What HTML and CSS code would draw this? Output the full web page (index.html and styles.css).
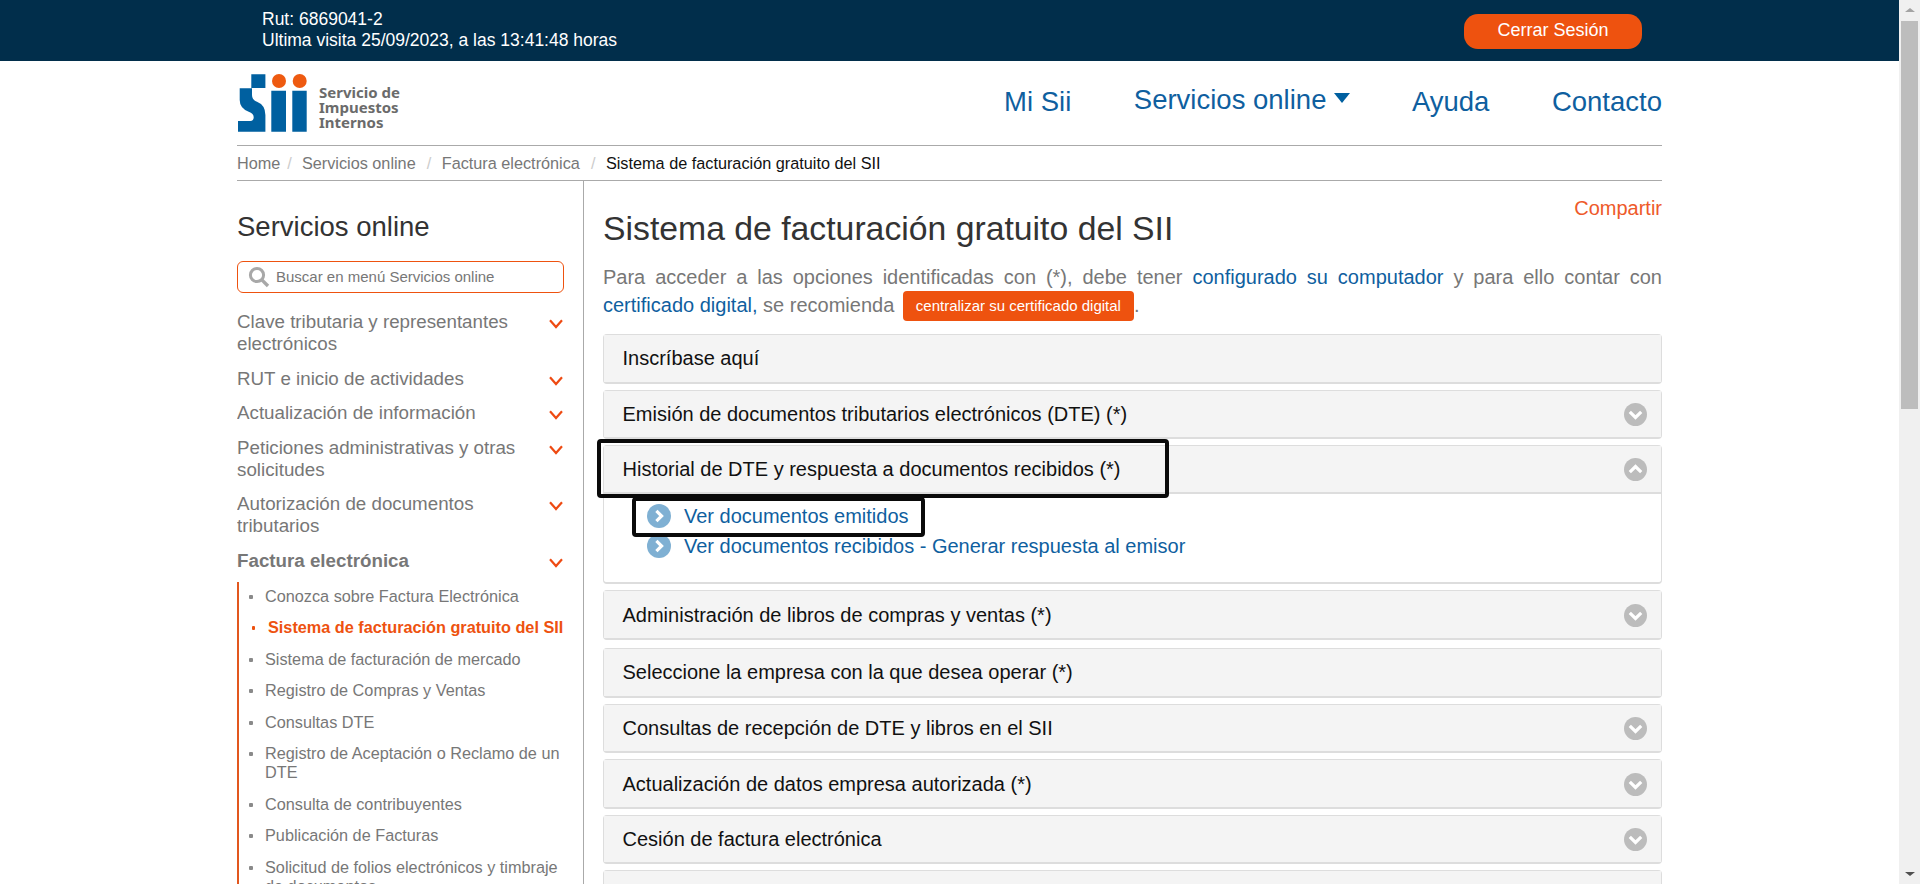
FILE: index.html
```html
<!DOCTYPE html>
<html lang="es">
<head>
<meta charset="utf-8">
<title>Sistema de facturación gratuito del SII</title>
<link rel="stylesheet" href="styles.css">
</head>
<body>
<svg class="sprite" width="0" height="0" aria-hidden="true">
  <symbol id="chev" viewBox="0 0 14 10"><path d="M1 1.2 7 8 13 1.2" fill="none" stroke="#ee4a12" stroke-width="2.2"/></symbol>
  <symbol id="circle-down" viewBox="0 0 23 23"><circle cx="11.5" cy="11.5" r="11.5" fill="#bcbcbc"/><path d="M5.8 8.8 11.5 14.4 17.2 8.8" fill="none" stroke="#fff" stroke-width="3.2"/></symbol>
  <symbol id="circle-up" viewBox="0 0 23 23"><circle cx="11.5" cy="11.5" r="11.5" fill="#bcbcbc"/><path d="M5.8 14.2 11.5 8.6 17.2 14.2" fill="none" stroke="#fff" stroke-width="3.2"/></symbol>
  <symbol id="circle-right" viewBox="0 0 24 24"><circle cx="12" cy="12" r="12" fill="#7fb0d3"/><path d="M9.4 6.8 14.6 12 9.4 17.2" fill="none" stroke="#fff" stroke-width="3.2"/></symbol>
</svg>
<div class="page">
  <header class="topbar">
    <div class="container topbar-inner">
      <div class="user">Rut: 6869041-2<br>Ultima visita 25/09/2023, a las 13:41:48 horas</div>
      <a class="logout">Cerrar Sesión</a>
    </div>
  </header>
  <div class="container">
    <div class="head">
      <a class="logo">
        <svg class="logo-mark" width="70" height="60" viewBox="5 4 70 60" aria-hidden="true">
          <path fill="#0060a0" d="M19.3 4.3H33.4V18H19.3ZM7.7 18.3H20V25Q20 30 25 31.7 33.4 35 33.4 45V61.7H6V51H18.3Q21.7 51 21.7 47.3 21.7 43.3 16.7 41.7 7.7 38.3 7.7 30Z"/>
          <path fill="#0060a0" d="M39.3 20.7H54V61.7H39.3ZM60.3 20.7H74.7V61.7H60.3Z"/>
          <circle cx="47" cy="11" r="7" fill="#ee5a10"/><circle cx="67.7" cy="11" r="7" fill="#ee5a10"/>
        </svg>
        <span class="logo-text">Servicio de<br>Impuestos<br>Internos</span>
      </a>
      <nav class="mainnav">
        <a>Mi Sii</a>
        <a class="nav-drop">Servicios online<i class="caret"></i></a>
        <a>Ayuda</a>
        <a>Contacto</a>
      </nav>
    </div>
    <div class="crumbs">
      <a>Home</a><span class="sep sep-first">/</span><a>Servicios online</a><span class="sep">/</span><a>Factura electrónica</a><span class="sep">/</span><span class="crumb-current">Sistema de facturación gratuito del SII</span>
    </div>
    <div class="columns">
      <aside class="sidebar">
        <h2>Servicios online</h2>
        <div class="search">
          <svg width="22" height="22" viewBox="0 0 22 22" aria-hidden="true"><circle cx="9" cy="9" r="6.6" fill="none" stroke="#a8a8a8" stroke-width="3"/><path d="M13.6 13.6 20 20" stroke="#a8a8a8" stroke-width="3.4"/></svg>
          <span class="search-text">Buscar en menú Servicios online</span>
        </div>
        <ul class="menu">
          <li><a>Clave tributaria y representantes electrónicos</a><svg><use href="#chev"/></svg></li>
          <li><a>RUT e inicio de actividades</a><svg><use href="#chev"/></svg></li>
          <li><a>Actualización de información</a><svg><use href="#chev"/></svg></li>
          <li><a>Peticiones administrativas y otras solicitudes</a><svg><use href="#chev"/></svg></li>
          <li><a>Autorización de documentos tributarios</a><svg><use href="#chev"/></svg></li>
          <li class="open"><a>Factura electrónica</a><svg><use href="#chev"/></svg></li>
        </ul>
        <ul class="submenu">
          <li>Conozca sobre Factura Electrónica</li>
          <li class="active">Sistema de facturación gratuito del SII</li>
          <li>Sistema de facturación de mercado</li>
          <li>Registro de Compras y Ventas</li>
          <li>Consultas DTE</li>
          <li>Registro de Aceptación o Reclamo de un DTE</li>
          <li>Consulta de contribuyentes</li>
          <li>Publicación de Facturas</li>
          <li>Solicitud de folios electrónicos y timbraje de documentos</li>
        </ul>
      </aside>
      <main class="content">
        <a class="share">Compartir</a>
        <h1>Sistema de facturación gratuito del SII</h1>
        <p class="intro">Para acceder a las opciones identificadas con (*), debe tener <a>configurado su computador</a> y para ello contar con <a>certificado digital,</a> se recomienda <a class="cert-btn">centralizar su certificado digital</a>.</p>
        <div class="panel"><div class="panel-head">Inscríbase aquí</div></div>
        <div class="panel"><div class="panel-head">Emisión de documentos tributarios electrónicos (DTE) (*)<svg><use href="#circle-down"/></svg></div></div>
        <div class="panel panel-open">
          <div class="panel-head">Historial de DTE y respuesta a documentos recibidos (*)<svg><use href="#circle-up"/></svg></div>
          <ul class="panel-list">
            <li><svg><use href="#circle-right"/></svg><a>Ver documentos emitidos</a></li>
            <li><svg><use href="#circle-right"/></svg><a>Ver documentos recibidos - Generar respuesta al emisor</a></li>
          </ul>
        </div>
        <div class="panel panel-wide-gap"><div class="panel-head">Administración de libros de compras y ventas (*)<svg><use href="#circle-down"/></svg></div></div>
        <div class="panel"><div class="panel-head">Seleccione la empresa con la que desea operar (*)</div></div>
        <div class="panel"><div class="panel-head">Consultas de recepción de DTE y libros en el SII<svg><use href="#circle-down"/></svg></div></div>
        <div class="panel"><div class="panel-head">Actualización de datos empresa autorizada (*)<svg><use href="#circle-down"/></svg></div></div>
        <div class="panel"><div class="panel-head">Cesión de factura electrónica<svg><use href="#circle-down"/></svg></div></div>
        <div class="panel"><div class="panel-head"><svg><use href="#circle-down"/></svg></div></div>
      </main>
    </div>
  </div>
</div>
<div class="mark mark-head"></div>
<div class="mark mark-link"></div>
<div class="scrollbar">
  <i class="arrow-up"></i>
  <div class="thumb"></div>
  <i class="arrow-down"></i>
</div>
</body>
</html>
```
FILE: styles.css
```css
* { box-sizing: border-box; }
html, body { margin: 0; height: 884px; overflow: hidden; background: #fff; }
body { position: relative; font-family: "Liberation Sans", Arial, sans-serif; color: #777; }
ul { list-style: none; margin: 0; padding: 0; }
.sprite { position: absolute; }
.page { width: 1899px; height: 884px; overflow: hidden; }
.container { width: 1425px; margin: 0 auto; }

.topbar { height: 61px; background: #012e4b; }
.topbar-inner { display: flex; justify-content: space-between; align-items: flex-start; }
.user { padding: 9px 0 0 25px; color: #fff; font-size: 17.5px; line-height: 20.6px; }
.logout { margin: 14px 20px 0 0; width: 178px; height: 35px; border-radius: 14px; background: #ee520f; color: #fff; font-size: 18px; line-height: 33px; text-align: center; }

.head { height: 85px; padding-top: 13px; border-bottom: 1px solid #aaa; display: flex; justify-content: space-between; align-items: flex-start; }
.logo { display: flex; align-items: flex-start; gap: 12px; }
.logo-mark { display: block; }
.logo-text { margin-top: 11px; color: #6b6b6b; font-family: "Noto Sans", sans-serif; font-weight: 700; font-size: 15px; line-height: 14.8px; }
.mainnav { display: flex; gap: 62.5px; padding-top: 11px; font-size: 27.5px; line-height: 34px; color: #0f5f9f; }
.nav-drop { display: flex; align-items: center; gap: 8px; margin: -2px -1px 0 0; height: 34px; }
.caret { width: 0; height: 0; border-left: 8px solid transparent; border-right: 8px solid transparent; border-top: 10px solid #0060a0; margin-top: -4px; }

.crumbs { height: 35px; border-bottom: 1px solid #aaa; display: flex; align-items: center; font-size: 16.25px; color: #777; }
.sep { color: #ccc; padding: 0 10.5px 0 11px; }
.sep-first { padding: 0 10px 0 7px; }
.crumb-current { color: #111; }

.columns { display: grid; grid-template-columns: 347px 1fr; }
.sidebar { border-right: 1px solid #aaa; padding: 31px 19px 0 0; height: 720px; overflow: hidden; }
.sidebar h2 { margin: 0 0 19px; font-weight: 400; font-size: 27.5px; line-height: 30px; color: #333; }
.search { height: 32px; border: 1px solid #ee520f; border-radius: 6px; padding-left: 10px; display: flex; align-items: center; gap: 6px; font-size: 15px; color: #777; margin-bottom: 18px; }
.search-text { margin-top: -2px; }
.menu li { display: flex; justify-content: space-between; align-items: flex-start; font-size: 18.75px; line-height: 22px; margin-bottom: 12.5px; }
.menu li a { width: 290px; }
.menu li svg { width: 14px; height: 10px; margin: 8px 1px 0 0; flex: none; }
.menu .open { font-weight: 700; margin-bottom: 10px; }
.submenu { border-left: 2px solid #e2571e; padding: 5px 0 0 26px; font-size: 16.25px; line-height: 19px; }
.submenu li { position: relative; margin-bottom: 12.5px; }
.submenu li::before { content: ""; position: absolute; left: -16px; top: 8px; width: 4px; height: 4px; background: #8a8a8a; border-radius: 1px; }
.submenu .active { color: #ee520f; font-weight: 700; margin-left: 3px; }
.submenu .active::before { background: #ee520f; left: -16px; width: 3px; }

.content { padding: 0 0 0 19px; }
.share { float: right; margin-top: 15px; font-size: 20px; line-height: 24px; color: #ee5a2a; }
h1 { margin: 0; padding-top: 27px; font-weight: 400; font-size: 33.75px; line-height: 40px; color: #333; }
.intro { margin: 15px 0 0; font-size: 20px; line-height: 28px; text-align: justify; color: #777; }
.intro a { color: #0f5f9f; }
.intro .cert-btn { display: inline-block; position: relative; top: -1px; height: 30px; padding: 0 13px; margin-left: 3px; background: #ee520f; color: #fff; border-radius: 4px; font-size: 15px; line-height: 30px; vertical-align: baseline; }
.panel { margin-bottom: 6px; border: 1px solid #ddd; border-width: 1px 1px 2px 1px; border-radius: 4px; background: #fff; }
.intro + .panel { margin-top: 12px; }
.panel-head { height: 46.6px; background: #f4f4f4; padding: 1px 0 0 18.5px; display: flex; justify-content: space-between; align-items: center; font-size: 20px; color: #111; }
.panel-head svg { width: 23px; height: 23px; margin-right: 14px; margin-left: auto; }
.panel-open .panel-head { border-bottom: 2px solid #ddd; height: 48px; }
.panel-list { height: 88.3px; padding: 7px 0 0 43px; font-size: 20px; line-height: 30px; color: #0f5f9f; }
.panel-list li { display: flex; align-items: center; gap: 13px; }
.panel-list svg { width: 24px; height: 24px; flex: none; }
.panel-wide-gap { margin-bottom: 8px; }

.mark { position: absolute; border: 4px solid #0a0a0a; border-radius: 4px; }
.mark-head { left: 597px; top: 439px; width: 572px; height: 59px; }
.mark-link { left: 632px; top: 497px; width: 293px; height: 40px; }

.scrollbar { position: absolute; right: 0; top: 0; width: 21px; height: 884px; background: #f0f0f0; display: flex; flex-direction: column; align-items: center; }
.thumb { width: 17px; height: 388px; margin-top: 9px; background: #bdbdbd; }
.arrow-up { margin-top: 8px; width: 0; height: 0; border-left: 5px solid transparent; border-right: 5px solid transparent; border-bottom: 4px solid #a3a3a3; }
.arrow-down { margin-top: auto; margin-bottom: 8px; width: 0; height: 0; border-left: 5px solid transparent; border-right: 5px solid transparent; border-top: 4px solid #505050; }
```
